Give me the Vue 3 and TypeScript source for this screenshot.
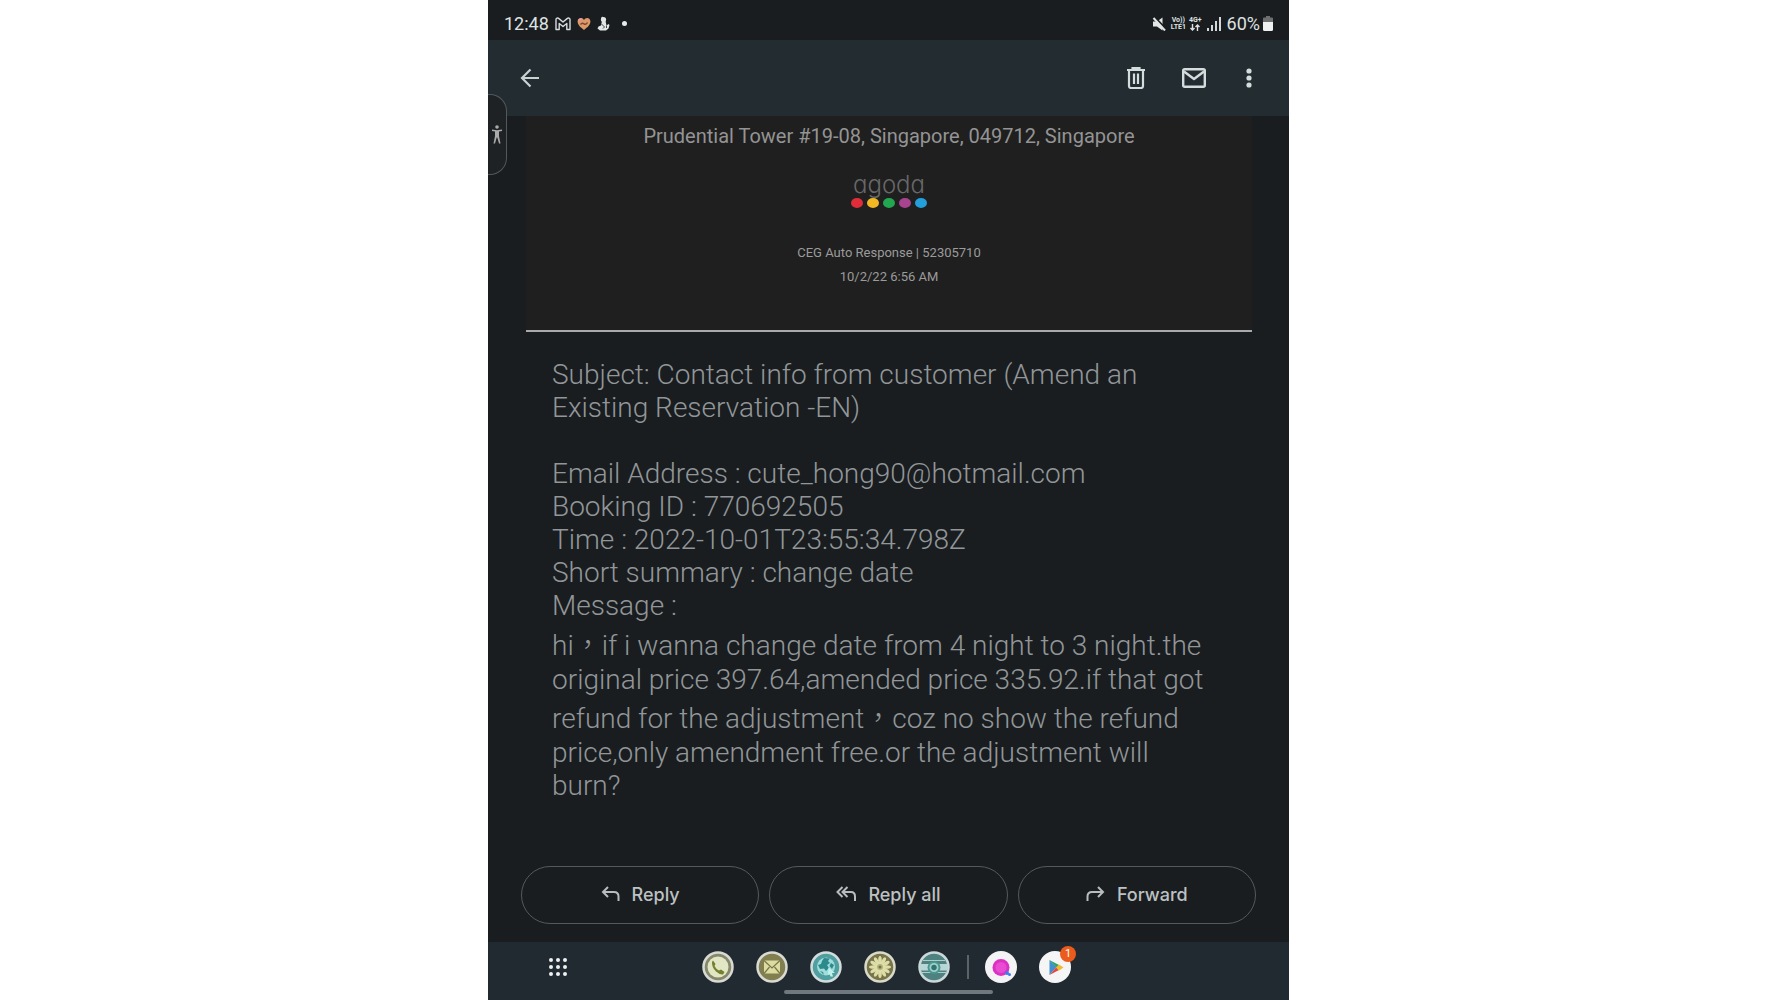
<script setup lang="ts">
interface MailField {
  label: string
  value: string
}

const subject = 'Subject: Contact info from customer (Amend an Existing Reservation -EN)'

const fields: MailField[] = [
  { label: 'Email Address', value: 'cute_hong90@hotmail.com' },
  { label: 'Booking ID', value: '770692505' },
  { label: 'Time', value: '2022-10-01T23:55:34.798Z' },
  { label: 'Short summary', value: 'change date' },
  { label: 'Message', value: '' },
]

const message =
  'hi，if i wanna change date from 4 night to 3 night.the original price 397.64,amended price 335.92.if that got refund for the adjustment，coz no show the refund price,only amendment free.or the adjustment will burn?'

const brandDots: string[] = ['#e12d3a', '#f2b824', '#22a650', '#a8438f', '#239fdc']
const petals: number[] = Array.from({ length: 12 }, (_, i) => i * 30)
const gridDots: number[] = [3, 10, 17]
</script>

<template>
  <div class="stage">
    <div class="phone">
      <div class="status">
        <div class="status-left">
          <span class="clock">12:48</span>
          <svg width="16" height="14" viewBox="0 0 16 14" fill="none" stroke="#d9dcdd" stroke-width="1.4" stroke-linejoin="round">
            <path d="M1 12.5V2.5C1 1 2.6.6 3.6 1.4L8 5l4.400-3.600C13.400.6 15 1 15 2.500V12.500H11.800V6.500L8 9.500 4.200 6.500V12.500Z" />
          </svg>
          <svg width="14" height="14" viewBox="0 0 14 14">
            <path d="M7 13C4 10.500.6 8 .6 4.500.6 2.400 2 1 3.800 1 5.200 1 6.400 1.800 7 3 7.600 1.800 8.800 1 10.200 1 12 1 13.400 2.400 13.400 4.500 13.400 8 10 10.500 7 13Z" fill="#dd9868" />
            <path d="M1.500 3.500Q3 1.500 5 2.200" stroke="#e79bb0" stroke-width="1.600" fill="none" />
            <path d="M3.500 7.500Q5 5.500 7 6.800T10.500 5.500" stroke="#7a4638" stroke-width="1.500" fill="none" />
          </svg>
          <svg width="13" height="15" viewBox="0 0 13 15" fill="#e3e6e6">
            <circle cx="6.500" cy="3.500" r="2.600" />
            <path d="M4.500 1 6 .8 6 3H4.500ZM5 5H8.500L9.500 9.500 11.500 8 12.500 9 11.500 12.500 9 14.500H3L.5 12.500 1.500 10.500 4 9.500Z" />
            <path d="M4.500 8 7.500 11 6 12.500M9.500 9.500V12" stroke="#3f4548" fill="none" />
          </svg>
          <i class="more-dot"></i>
        </div>
        <div class="status-right">
          <svg class="mute" width="15" height="14" viewBox="0 0 15 14">
            <path d="M1 4.500H5L10.500.5V13.500L5 9.500H1Z" fill="#e4e6e6" />
            <path d="M3 .5 14.500 12.500" stroke="#1a1e20" stroke-width="2" />
            <path d="M1.500 1 13 13.500" stroke="#e4e6e6" stroke-width="2" />
          </svg>
          <span class="tiny"><span>Vo))</span><span>LTE1</span></span>
          <span class="tiny net"><span>4G+</span>
            <svg width="10" height="7" viewBox="0 0 10 7" fill="none" stroke="#dfe2e2" stroke-width="1.400"><path d="M2.500 0V6M.5 4 2.500 6 4.500 4M7.500 7V1M5.500 3 7.500 1 9.500 3" /></svg>
          </span>
          <svg class="signal" width="14" height="14" viewBox="0 0 14 14" fill="#d5d8d9">
            <path d="M0 11H2V14H0ZM4 8H6V14H4ZM8 4H10V14H8ZM12 0H14V14H12Z" />
          </svg>
          <span class="percent">60%</span>
          <svg width="10" height="15" viewBox="0 0 10 15">
            <path d="M3 0H7V1.500H9Q10 1.500 10 2.500V7H0V2.500Q0 1.500 1 1.500H3Z" fill="#6d7071" />
            <path d="M0 6H10V13.500Q10 15 8.500 15H1.500Q0 15 0 13.500Z" fill="#f0f1f1" />
          </svg>
        </div>
      </div>

      <header class="toolbar">
        <button class="icon-button" type="button" aria-label="Back">
          <svg width="20" height="20" viewBox="0 0 20 20" fill="none" stroke="#c9d1d3" stroke-width="2.200"><path d="M19 10H2M10.500 1.500 2 10 10.500 18.500" /></svg>
        </button>
        <div class="tools">
          <button class="icon-button" type="button" aria-label="Delete">
            <svg width="20" height="22" viewBox="0 0 20 22" fill="none" stroke="#d5dcde" stroke-width="2.200"><path d="M1 3H19M6.500 2.500V1H13.500V2.500M3 3V19Q3 21 5 21H15Q17 21 17 19V3M8 6.500V17M12 6.500V17" /></svg>
          </button>
          <button class="icon-button" type="button" aria-label="Mark as unread">
            <svg width="24" height="20" viewBox="0 0 24 20" fill="none" stroke="#d5dcde" stroke-width="2.400" stroke-linejoin="round"><rect x="1.200" y="1.200" width="21.600" height="17.600" rx="1.500" /><path d="M2 3.500 12 11 22 3.500" /></svg>
          </button>
          <button class="icon-button" type="button" aria-label="More options">
            <svg width="6" height="20" viewBox="0 0 6 20" fill="#d5dcde"><circle cx="3" cy="3" r="2.600" /><circle cx="3" cy="10" r="2.600" /><circle cx="3" cy="17" r="2.600" /></svg>
          </button>
        </div>
      </header>

      <button class="edge-handle" type="button" aria-label="Accessibility">
        <svg width="12" height="19" viewBox="0 0 12 19" fill="#a9abab"><circle cx="6" cy="2" r="1.800" /><path d="M1 4.500 6 5.200 11 4.500V6L8 6.600V11L9.500 18.500H8L6.300 12.500H5.700L4 18.500H2.500L4 11V6.600L1 6Z" /></svg>
      </button>

      <main class="mail">
        <section class="card">
          <p class="address">Prudential Tower #19-08, Singapore, 049712, Singapore</p>
          <div class="brand">
            <span class="brand-name">agoda</span>
            <span class="brand-dots">
              <i v-for="color in brandDots" :key="color" :style="{ background: color }"></i>
            </span>
          </div>
          <p class="meta">CEG Auto Response | 52305710</p>
          <p class="meta">10/2/22 6:56 AM</p>
        </section>
        <article class="text">
          <p class="subject">{{ subject }}</p>
          <p v-for="field in fields" :key="field.label">{{ field.label }} : {{ field.value }}</p>
          <p class="message" lang="zh-Hant">{{ message }}</p>
        </article>
      </main>

      <div class="actions">
        <button type="button">
          <svg width="19" height="16" viewBox="0 0 19 16" fill="none" stroke="#b9bcbd" stroke-width="2"><path d="M7 1 2 6 7 11M2 6H13Q17.500 6 17.500 10.500V15" /></svg>
          <span>Reply</span>
        </button>
        <button type="button">
          <svg width="20" height="16" viewBox="0 0 20 16" fill="none" stroke="#b9bcbd" stroke-width="2"><path d="M6.500 1 1.500 6 6.500 11M11.500 1 6.500 6 11.500 11M6.500 6H15Q19 6 19 10.500V15" /></svg>
          <span>Reply all</span>
        </button>
        <button type="button">
          <svg width="19" height="16" viewBox="0 0 19 16" fill="none" stroke="#b9bcbd" stroke-width="2"><path d="M12 1 17 6 12 11M17 6H6Q1.500 6 1.500 10.500V15" /></svg>
          <span>Forward</span>
        </button>
      </div>

      <nav class="dock">
        <button class="icon-button" type="button" aria-label="All apps">
          <svg width="20" height="20" viewBox="0 0 20 20" fill="#eef0f1">
            <template v-for="y in gridDots" :key="y">
              <circle v-for="x in gridDots" :key="x" :cx="x" :cy="y" r="2" />
            </template>
          </svg>
        </button>
        <div class="apps">
          <button class="app" type="button" aria-label="Phone">
            <svg viewBox="0 0 32 32"><circle cx="16" cy="16" r="14.500" fill="#85886b" stroke="#d9dad2" stroke-width="2.500" /><circle cx="16" cy="16" r="10.500" fill="#e3e6c4" /><path d="M11 9.500 13.500 13 12.500 15Q14 18 17 19.500L19 18.500 22.500 21 21 23.500Q18 24 14 20.500 9.500 16 10 11Z" fill="#75802f" /></svg>
          </button>
          <button class="app" type="button" aria-label="Messages">
            <svg viewBox="0 0 32 32"><circle cx="16" cy="16" r="14.500" fill="#817e50" stroke="#d9dad2" stroke-width="2.500" /><rect x="8" y="9.500" width="16" height="13" fill="#dcdba0" /><path d="M8 9.500 16 17 24 9.500M8 22.500 13.500 16M24 22.500 18.500 16" fill="none" stroke="#77764b" stroke-width="1.200" /></svg>
          </button>
          <button class="app" type="button" aria-label="Browser">
            <svg viewBox="0 0 32 32"><circle cx="16" cy="16" r="14.500" fill="#4f9ea0" stroke="#d3dcdd" stroke-width="2.500" /><circle cx="16" cy="15.500" r="9" fill="#a0dcda" /><path d="M14 7 20 7.500 18 10 20 12 17 14 19 17 16 20 14 17.500 10 18 8 14 11 13 12 10ZM21 12 24 14 22 18 19.500 15ZM10 20 13 21 14 24Z" fill="#2c898c" /><path d="M18.500 16.500 25 22 22 22 23 25.500 20.500 25.500 19.500 23 18 24Z" fill="#bff0ec" /></svg>
          </button>
          <button class="app" type="button" aria-label="Gallery">
            <svg viewBox="0 0 32 32"><circle cx="16" cy="16" r="14.500" fill="#77744a" stroke="#d9dac8" stroke-width="2.500" /><ellipse v-for="angle in petals" :key="angle" cx="16" cy="9.500" rx="1.800" ry="4.500" fill="#dddda8" :transform="`rotate(${angle} 16 16)`" /><circle cx="16" cy="16" r="3" fill="#b5b47c" /><circle cx="16" cy="16" r="1.500" fill="#77744a" /></svg>
          </button>
          <button class="app" type="button" aria-label="Camera">
            <svg viewBox="0 0 32 32"><circle cx="16" cy="16" r="14.500" fill="#4e817f" stroke="#cbd8da" stroke-width="2.500" /><path d="M5 9.500H27M3 21.500H29" stroke="#a9cfcc" stroke-width="1" /><path d="M2 13H30V19.500H2Z" fill="#b9d6d6" /><circle cx="16" cy="16.500" r="6.500" fill="#4c9691" /><circle cx="16" cy="16.500" r="4.500" fill="#9bd1ca" /><circle cx="16" cy="16.500" r="2.700" fill="#34736f" /></svg>
          </button>
          <i class="divider"></i>
          <button class="app" type="button" aria-label="Assistant">
            <svg viewBox="0 0 32 32"><circle cx="16" cy="16" r="16" fill="#f3f3f5" /><circle cx="16" cy="16.500" r="8.500" fill="#dc2fc4" /><circle cx="16" cy="16.500" r="5.500" fill="#e94bd2" /><circle cx="22" cy="22" r="2" fill="#3d7ee8" /><circle cx="24.500" cy="23.500" r="1.500" fill="#3d7ee8" /></svg>
          </button>
          <button class="app" type="button" aria-label="Play Store, 1 update">
            <svg viewBox="0 0 32 32"><circle cx="16" cy="16" r="16" fill="#f5f5f6" /><path d="M10.500 9 17.500 16 10.500 24Z" fill="#418fce" /><path d="M10.500 9 20 14 17.500 16.500Z" fill="#35a36c" /><path d="M10.500 24 20 19 17.500 16Z" fill="#df4940" /><path d="M20 13.500 24.500 16.500 20 19.500 17 16.500Z" fill="#f0ba2d" /></svg>
            <span class="badge">1</span>
          </button>
        </div>
        <i class="home-bar"></i>
      </nav>
    </div>
  </div>
</template>

<style>
body {
  margin: 0;
  background: #fff;
}
</style>

<style scoped>
.stage {
  display: grid;
  grid-template-columns: 488fr 801fr 489fr;
  min-height: 100vh;
  font-family: Roboto, "Noto Sans CJK TC", sans-serif;
}
.phone {
  grid-column: 2;
  position: relative;
  display: flex;
  flex-direction: column;
  background: #191d20;
  min-width: 0;
}
p {
  margin: 0;
}
svg {
  display: block;
  flex: none;
}
button {
  border: 0;
  padding: 0;
  background: none;
  color: inherit;
  font: inherit;
}
.status {
  display: flex;
  justify-content: space-between;
  align-items: center;
  height: 40px;
  padding: 7px 16px 0;
  box-sizing: border-box;
  background: #1a1d20;
  color: #dfe2e2;
  font-size: 18px;
}
.status-left,
.status-right {
  display: flex;
  align-items: center;
}
.status-left {
  gap: 6px;
}
.more-dot {
  width: 5px;
  height: 5px;
  margin-left: 6px;
  border-radius: 50%;
  background: #e8eaea;
}
.status-right {
  gap: 3px;
}
.mute {
  margin-right: 1px;
}
.signal {
  margin: 0 3px 0 2px;
}
.tiny {
  display: flex;
  flex-direction: column;
  align-items: center;
  font-size: 7px;
  line-height: 7px;
  font-weight: 700;
}
.toolbar {
  display: flex;
  justify-content: space-between;
  align-items: center;
  height: 76px;
  padding: 0 37px 0 32px;
  box-sizing: border-box;
  background: #222c31;
}
.tools {
  display: flex;
  align-items: center;
  gap: 36px;
}
.tools .icon-button:last-child {
  margin-left: 4px;
}
.edge-handle {
  position: absolute;
  left: 0;
  top: 94px;
  width: 19px;
  height: 81px;
  display: flex;
  align-items: center;
  justify-content: center;
  border: 1px solid #53595b;
  border-left: 0;
  border-radius: 0 17px 17px 0;
  background: #1f2224;
}
.mail {
  flex: 1;
  padding: 0 37px 0 38px;
}
.card {
  display: flex;
  flex-direction: column;
  align-items: center;
  padding: 8px 0 41px;
  border-bottom: 2px solid #a9aaaa;
  background: #1f1f1f;
  color: #949494;
}
.address {
  font-size: 20px;
  line-height: 24px;
}
.brand {
  display: flex;
  flex-direction: column;
  align-items: center;
  margin: 24px 0 33px;
}
.brand-name {
  font-family: Inter, sans-serif;
  font-feature-settings: "cv11";
  font-size: 24px;
  font-weight: 300;
  line-height: 26px;
  color: #686868;
}
.brand-dots {
  display: flex;
  gap: 4px;
}
.brand-dots i {
  width: 12px;
  height: 10px;
  border-radius: 50%;
}
.meta {
  font-size: 13px;
  line-height: 24px;
  color: #9b9b9b;
}
.text {
  padding: 26px 40px 26px 26px;
  font-size: 28px;
  font-weight: 300;
  line-height: normal;
  color: #929698;
}
.subject {
  margin-bottom: 33px;
}
.message {
  margin-top: 1px;
}
.actions {
  display: grid;
  grid-template-columns: repeat(3, 1fr);
  gap: 10px;
  padding: 0 33px 18px;
}
.actions button {
  display: flex;
  align-items: center;
  justify-content: center;
  gap: 12px;
  height: 58px;
  padding-bottom: 2px;
  border: 1px solid #56595b;
  border-radius: 29px;
  color: #bec1c2;
  font-family: Inter, sans-serif;
  font-size: 18px;
  font-weight: 500;
}
.dock {
  position: relative;
  display: flex;
  align-items: center;
  height: 58px;
  padding: 0 60px;
  box-sizing: border-box;
  background: #212a30;
}
.apps {
  flex: 1;
  display: flex;
  align-items: center;
  gap: 22px;
  margin-left: 134px;
  padding-bottom: 8px;
}
.dock > .icon-button {
  padding-bottom: 8px;
}
.app {
  position: relative;
  width: 32px;
  height: 32px;
}
.divider {
  width: 2px;
  height: 24px;
  margin: 0 -6px 0 -5px;
  background: #5a6367;
}
.badge {
  position: absolute;
  top: -5px;
  right: -5px;
  width: 16px;
  height: 16px;
  border-radius: 50%;
  background: #ea5b1c;
  color: #fff;
  font-size: 11px;
  line-height: 16px;
  text-align: center;
}
.home-bar {
  position: absolute;
  left: 37%;
  right: 37%;
  bottom: 6px;
  height: 4px;
  border-radius: 2px;
  background: #70787e;
}
</style>
